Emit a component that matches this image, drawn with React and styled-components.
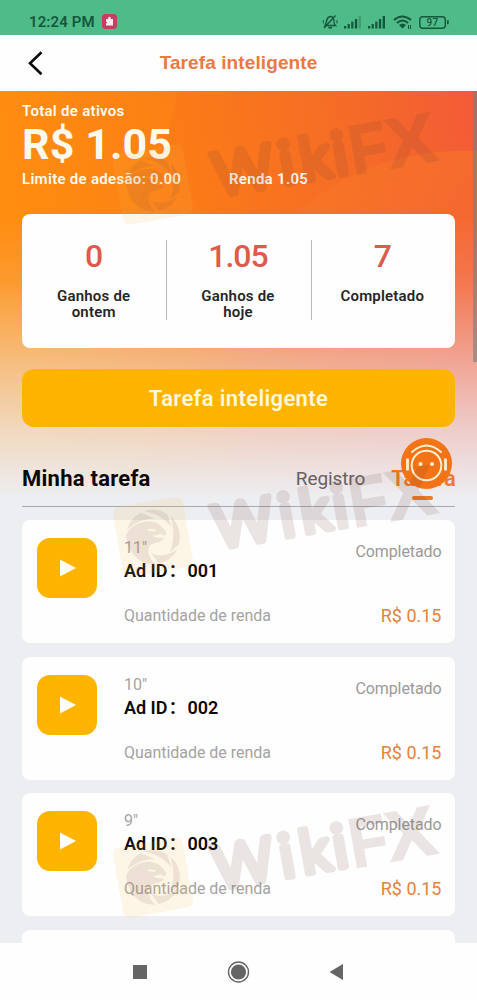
import styled, { createGlobalStyle } from 'styled-components';

const GlobalStyle = createGlobalStyle`
  * {
    box-sizing: border-box;
  }
  body {
    margin: 0;
    font-family: Roboto, sans-serif;
    background: #fefefe;
  }
`;

const Screen = styled.div`
  position: relative;
  display: flex;
  flex-direction: column;
  width: 477px;
  height: 1000px;
  overflow: hidden;
`;

const StatusBar = styled.div`
  display: flex;
  align-items: center;
  justify-content: space-between;
  flex: none;
  height: 35px;
  padding: 8px 27px 0 29px;
  background: #4fbb89;
  color: #14583b;
`;

const Clock = styled.div`
  display: flex;
  align-items: center;
  gap: 7px;
  font-size: 15px;
  font-weight: 600;
  letter-spacing: 0.1px;
`;

const StatusIcons = styled.svg`
  display: block;
  width: 130px;
  height: 18px;
`;

const Header = styled.header`
  display: grid;
  grid-template-columns: 60px 1fr 60px;
  align-items: center;
  flex: none;
  height: 56px;
  background: #fefefe;
`;

const BackIcon = styled.svg`
  margin-left: 26px;
`;

const Title = styled.h1`
  margin: 0;
  text-align: center;
  font: bold 19px 'Liberation Sans', sans-serif;
  letter-spacing: 0.1px;
  color: #ec7843;
`;

const Content = styled.main`
  position: relative;
  flex: 1;
  min-height: 0;
  padding: 10px 22px 0;
  overflow: hidden;
  background: #edeef2;
`;

const Backdrop = styled.svg`
  position: absolute;
  top: 0;
  left: 0;
`;

const Body = styled.div`
  position: relative;
`;

const Assets = styled.section`
  height: 112.5px;
  color: #fffaf0;
  font-weight: 600;
`;

const Small = styled.div`
  font-size: 15px;
  line-height: 20px;
  letter-spacing: 0.3px;
`;

const Amount = styled.div`
  height: 48px;
  font-size: 43px;
  line-height: 47px;
  font-weight: 700;
  letter-spacing: 0.1px;
`;

const Limits = styled.div`
  display: grid;
  grid-template-columns: 207px 1fr;
`;

const Stats = styled.section`
  display: grid;
  grid-template-columns: repeat(3, 1fr);
  height: 134px;
  padding-top: 26px;
  border-radius: 8px;
  background: #fefefe;
`;

const Stat = styled.div`
  height: 80px;
  padding: 0 31px 0 29px;
  text-align: center;
  border-left: 1px solid ${(p) => (p.$first ? 'transparent' : '#b9b9b9')};
`;

const StatValue = styled.div`
  height: 34px;
  margin: 0 -5px;
  font-size: 32px;
  line-height: 33px;
  font-weight: 500;
  letter-spacing: -1px;
  color: #e05a4b;
`;

const StatLabel = styled.div`
  margin: 14px -10px 0;
  font-size: 15px;
  line-height: 16px;
  font-weight: 600;
  letter-spacing: 0.2px;
  color: #262626;
`;

const TaskButton = styled.button`
  display: block;
  width: 100%;
  height: 58px;
  margin-top: 21.5px;
  padding: 0;
  border: 0;
  border-radius: 12px;
  background: #ffb400;
  color: #fff8dc;
  font: 600 22px Roboto, sans-serif;
  letter-spacing: 0.35px;
`;

const Tabs = styled.div`
  display: flex;
  align-items: center;
  height: 80px;
  padding-top: 23px;
  border-bottom: 1px solid #aaa9ad;
`;

const Heading = styled.h2`
  flex: 1;
  margin: 0;
  font-size: 22px;
  font-weight: 700;
  letter-spacing: 0.25px;
  color: #080808;
`;

const Tab = styled.div`
  position: relative;
  margin: 0 -1px 0 27px;
  font-size: ${(p) => (p.$active ? '22px' : '19px')};
  font-weight: ${(p) => (p.$active ? 600 : 400)};
  letter-spacing: ${(p) => (p.$active ? '0.3px' : '-0.1px')};
  color: ${(p) => (p.$active ? '#f07a2c' : '#68605f')};

  &::after {
    content: '';
    display: ${(p) => (p.$active ? 'block' : 'none')};
    position: absolute;
    left: 21px;
    top: 30px;
    width: 21px;
    height: 4px;
    border-radius: 2px;
    background: #f07a1f;
  }
`;

const TaskList = styled.div`
  display: flex;
  flex-direction: column;
  gap: 13.5px;
  margin-top: 13px;
`;

const Task = styled.article`
  display: grid;
  grid-template-columns: 87px 1fr auto;
  height: 123px;
  padding: 18px 13.5px 0 15px;
  border-radius: 8px;
  background: #fefefe;
`;

const Play = styled.div`
  display: flex;
  align-items: center;
  justify-content: center;
  width: 60px;
  height: 60px;
  border-radius: 13px;
  background: #ffb400;
`;

const Duration = styled.div`
  height: 20px;
  font-size: 16px;
  line-height: 19px;
  color: #a5a4a4;
`;

const AdId = styled.div`
  height: 47px;
  font-size: 18px;
  line-height: 26px;
  font-weight: 600;
  color: #0b0906;
`;

const Colon = styled.span`
  display: inline-block;
  width: 20px;
  padding-left: 2.5px;
  font-size: 22px;
  line-height: 20px;
`;

const Caption = styled.div`
  font-size: 16px;
  line-height: 22px;
  letter-spacing: -0.03px;
  color: #a5a3a3;
`;

const Side = styled.div`
  text-align: right;
`;

const State = styled.div`
  height: 67px;
  padding-top: 3px;
  font-size: 16px;
  line-height: 22px;
  letter-spacing: -0.1px;
  color: #9b9999;
`;

const Reward = styled.div`
  font-size: 18px;
  line-height: 22px;
  color: #e28342;
`;

const ScrollThumb = styled.div`
  position: absolute;
  right: 0;
  top: 0;
  width: 4px;
  height: 271px;
  background: rgba(125, 125, 125, 0.6);
`;

const Assistant = styled.svg`
  position: absolute;
  left: 400px;
  top: 437px;
`;

const Overlay = styled.svg`
  position: absolute;
  inset: 0;
  pointer-events: none;
`;

const NavBar = styled.nav`
  display: flex;
  align-items: center;
  justify-content: center;
  flex: none;
  height: 57px;
  background: #fefefe;
`;

const stats = [
  { value: '0', label: 'Ganhos de ontem' },
  { value: '1.05', label: 'Ganhos de hoje' },
  { value: '7', label: 'Completado' },
];

const tasks = [
  { time: '11"', id: '001' },
  { time: '10"', id: '002' },
  { time: '9"', id: '003' },
];

const Signal = ({ x, weak }) => (
  <g transform={`translate(${x} 0)`} fill="#14583b">
    <rect x="0" y="13" width="2.2" height="2.5" />
    <rect x="3.6" y="11" width="2.2" height="4.5" />
    <rect x="7.2" y="8.6" width="2.2" height="6.9" />
    <rect x="10.8" y="6" width="2.4" height="9.5" />
    <rect x="14.6" y="3" width="2.4" height="12.5" opacity={weak ? 0.3 : 1} />
  </g>
);

const Watermark = ({ y }) => (
  <g transform={`translate(153 ${y}) rotate(-10)`}>
    <rect x="-35.5" y="-35.5" width="71" height="71" rx="7" fill="#f5bd48" opacity="0.13" />
    <g fill="#6d3e46" opacity="0.1">
      <path d="M-24 -12 A27 27 0 0 1 -8 -26 L5 -18 C-6 -20 -16 -17 -24 -12Z" />
      <path d="M-4 -27 A27 27 0 0 1 18 -20 L20 -6 C15 -16 8 -22 -4 -27Z" />
      <path d="M21 -17 A27 27 0 0 1 24 12 L14 18 C21 7 22 -5 21 -17Z" />
      <path d="M22 16 A27 27 0 0 1 1 27 L-5 15 C2 21 12 21 22 16Z" />
      <path d="M-26 -7 C-20 -15 -10 -18 0 -16 C7 -14 11 -9 14 -2 L12 1 L8 -2 L0 -1 C4 2 8 2 11 3 C6 8 0 5 -5 8 C-9 12 -7 21 -3 27 C-19 25 -28 10 -26 -7Z M-4 -9 L4 -7 L3 -5 L-4 -7Z" fillRule="evenodd" />
    </g>
    <g fill="#6d3e36" stroke="#6d3e36" strokeLinejoin="round" opacity="0.13" fontSize="60">
      <g fontFamily="Lato, sans-serif" fontWeight="400" strokeWidth="6">
        <text x="61" y="23" textLength="61" lengthAdjust="spacingAndGlyphs">W</text>
        <text x="128" y="23">i</text>
        <text x="149" y="23" textLength="30" lengthAdjust="spacingAndGlyphs">k</text>
        <text x="182" y="23">i</text>
      </g>
      <g fontFamily="Liberation Sans, sans-serif" fontWeight="700" fontSize="70" strokeWidth="1.6" strokeLinejoin="miter">
        <text x="199" y="25.5" textLength="38" lengthAdjust="spacingAndGlyphs">F</text>
        <text x="237" y="25.5" textLength="49" lengthAdjust="spacingAndGlyphs">X</text>
      </g>
    </g>
  </g>
);

const App = () => (
  <>
    <GlobalStyle />
    <Screen>
      <StatusBar>
        <Clock>
          12:24 PM
          <svg width="15" height="15" viewBox="0 0 15 15">
            <rect width="15" height="15" rx="3.5" fill="#c73e62" />
            <path d="M4 5h2.3V3.6a1.3 1.3 0 0 1 2.4 0V5H11v6.5H4V9.6l1.4-.9L4 7.6Z" fill="#ffeaf0" />
          </svg>
        </Clock>
        <StatusIcons viewBox="0 0 130 18">
          <g fill="none" stroke="#14583b" strokeWidth="1.4">
            <path d="M5 12.5 C7 10 6 5 9 4 C12 2.5 14 5 14 8 C14 11 14 11 15.5 12.5 Z M8.5 14 Q10 16 12 14 M15.5 2.5 L4 15" />
            <path d="M3.3 7v3.5 M17 7v3.5" strokeWidth="1" />
            <path d="M74 7 Q82 0 91 7 M77 10 Q82.5 5 88 10" strokeWidth="2.1" />
            <rect x="99.8" y="3.8" width="25.5" height="11.4" rx="3" />
          </g>
          <Signal x={24} weak />
          <Signal x={48} />
          <path d="M79 12 Q82.5 9 86 12 L82.5 15.5Z M88 12h1v4h-1z M90 12h1v4h-1z M127 7.3h1.7v4H127z" fill="#14583b" />
          <text x="112.5" y="13" textAnchor="middle" fontSize="10" letterSpacing="0.4" fontWeight="500" fill="#14583b">97</text>
        </StatusIcons>
      </StatusBar>

      <Header>
        <BackIcon width="18" height="26" viewBox="0 0 18 26">
          <path d="M15.5 2.2 L4 13.2 L15.5 24.2" fill="none" stroke="#0a0a0a" strokeWidth="2.6" />
        </BackIcon>
        <Title>Tarefa inteligente</Title>
      </Header>

      <Content>
        <Backdrop width="477" height="420" viewBox="0 0 477 420">
          <defs>
            <linearGradient id="warm" x1="0" y1="0.15" x2="1" y2="0">
              <stop offset="0" stopColor="#ff8f10" />
              <stop offset="0.4" stopColor="#fb7a18" />
              <stop offset="0.75" stopColor="#f56a28" />
              <stop offset="1" stopColor="#f35a38" />
            </linearGradient>
            <linearGradient id="fade" x1="0" y1="0" x2="0" y2="1">
              <stop offset="0.3" stopColor="#edeef2" stopOpacity="0" />
              <stop offset="0.45" stopColor="#edeef2" stopOpacity="0.13" />
              <stop offset="0.63" stopColor="#edeef2" stopOpacity="0.46" />
              <stop offset="0.8" stopColor="#edeef2" stopOpacity="0.76" />
              <stop offset="0.97" stopColor="#edeef2" />
            </linearGradient>
            <radialGradient id="pink" gradientUnits="userSpaceOnUse" cx="477" cy="400" r="320">
              <stop offset="0" stopColor="#f04a58" stopOpacity="0.6" />
              <stop offset="1" stopColor="#f04a58" stopOpacity="0" />
            </radialGradient>
          </defs>
          <rect width="477" height="420" fill="url(#warm)" />
          <path d="M178 0 Q160 90 110 150 Q60 190 0 206 V0Z" fill="#ff8c10" opacity="0.3" />
          <path d="M285 130 Q370 55 477 60 V420 H240 Q225 200 285 130Z" fill="#f77828" opacity="0.5" />
          <rect width="477" height="420" fill="url(#pink)" />
          <rect width="477" height="420" fill="url(#fade)" />
        </Backdrop>
        <Body>
          <Assets>
            <Small>Total de ativos</Small>
            <Amount>R$ 1.05</Amount>
            <Limits>
              <Small>Limite de adesão: 0.00</Small>
              <Small>Renda 1.05</Small>
            </Limits>
          </Assets>

          <Stats>
            {stats.map((s, i) => (
              <Stat key={s.label} $first={i === 0}>
                <StatValue>{s.value}</StatValue>
                <StatLabel>{s.label}</StatLabel>
              </Stat>
            ))}
          </Stats>

          <TaskButton>Tarefa inteligente</TaskButton>

          <Tabs>
            <Heading>Minha tarefa</Heading>
            <Tab>Registro</Tab>
            <Tab $active>Tarefa</Tab>
          </Tabs>

          <TaskList>
            {tasks.map((t) => (
              <Task key={t.id}>
                <Play>
                  <svg width="20" height="18" viewBox="0 0 20 18">
                    <path d="M3 0.5 L19 9 L3 17.5Z" fill="#fffdf5" />
                  </svg>
                </Play>
                <div>
                  <Duration>{t.time}</Duration>
                  <AdId>
                    Ad ID<Colon>:</Colon>
                    {t.id}
                  </AdId>
                  <Caption>Quantidade de renda</Caption>
                </div>
                <Side>
                  <State>Completado</State>
                  <Reward>R$ 0.15</Reward>
                </Side>
              </Task>
            ))}
            <Task />
          </TaskList>
        </Body>
        <ScrollThumb />
      </Content>

      <NavBar>
        <svg width="214" height="24" viewBox="0 0 214 24" fill="#656565">
          <rect x="1" y="5" width="14" height="14" />
          <circle cx="106.5" cy="12" r="7.6" />
          <circle cx="106.5" cy="12" r="10" fill="none" stroke="#656565" strokeWidth="1.4" />
          <path d="M197.5 12 L211 4 V20Z" />
        </svg>
      </NavBar>

      <Assistant width="52" height="52" viewBox="0 0 52 52">
        <circle cx="26.5" cy="26.5" r="25.5" fill="#f27416" />
        <g fill="none" stroke="#fff0d2" strokeLinecap="round">
          <circle cx="26.5" cy="28.5" r="14.8" strokeWidth="2" />
          <path d="M12 15 Q26.5 2 41 15" strokeWidth="2" />
          <path d="M7.5 21.5v12 M45.5 21.5v12" strokeWidth="2.8" strokeLinecap="butt" />
        </g>
        <circle cx="20.5" cy="27" r="2" fill="#fff0d2" />
        <circle cx="32" cy="27" r="2" fill="#fff0d2" />
      </Assistant>

      <Overlay width="477" height="1000" viewBox="0 0 477 1000">
        <Watermark y={184.5} />
        <Watermark y={537} />
        <Watermark y={877.5} />
      </Overlay>
    </Screen>
  </>
);

export default App;
